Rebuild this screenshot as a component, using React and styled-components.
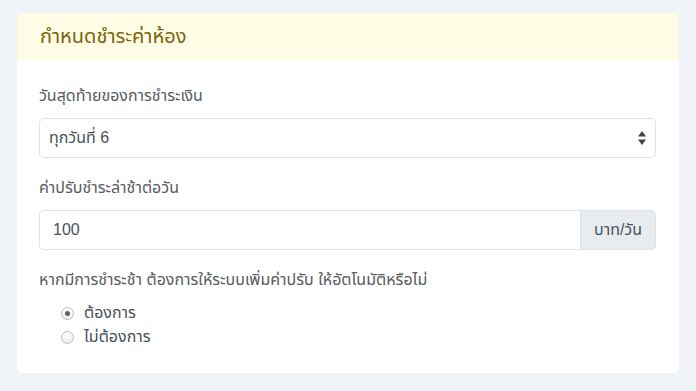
import React, { useState } from "react";
import styled, { createGlobalStyle } from "styled-components";

const GlobalStyle = createGlobalStyle`
  html, body {
    margin: 0;
    padding: 0;
    background: #f0f3f7;
    font-family: "Liberation Sans", "Noto Sans Thai", "Noto Sans", sans-serif;
  }
`;

const Page = styled.div`
  padding: 13px 17px 18px 17px;
`;

const Card = styled.section`
  background: #ffffff;
  border-radius: 5px;
  overflow: hidden;
  width: 662px;
`;

const CardHeader = styled.header`
  background: #fffce6;
  height: 48px;
  display: flex;
  align-items: center;
  padding: 0 23px;
  font-size: 20px;
  color: #7c650a;
`;

const CardBody = styled.div`
  padding: 23px 23px 24px 22px;
  display: flex;
  flex-direction: column;
`;

const Label = styled.label`
  font-size: 16px;
  line-height: 24px;
  color: #575c61;
  margin-bottom: ${(p) => p.$gap || 10}px;
`;

const Field = styled.div`
  height: 40px;
  margin-bottom: 18px;
  display: flex;
`;

const Select = styled.div`
  flex: 1;
  border: 1px solid #dfe3e8;
  border-radius: 5px;
  display: flex;
  align-items: center;
  justify-content: space-between;
  padding: 0 8px 0 9px;
  font-size: 16px;
  color: #4a5259;
`;

const Input = styled.input`
  flex: 1;
  min-width: 0;
  border: 1px solid #dfe3e8;
  border-right: none;
  border-radius: 5px 0 0 5px;
  padding: 0 13px;
  font: inherit;
  font-size: 16px;
  color: #4a5259;
  outline: none;
`;

const Addon = styled.span`
  width: 74px;
  background: #e9ecef;
  border: 1px solid #dfe3e8;
  border-radius: 0 5px 5px 0;
  display: flex;
  align-items: center;
  justify-content: center;
  font-size: 16px;
  color: #4a5259;
`;

const RadioList = styled.div`
  display: flex;
  flex-direction: column;
  padding-left: 22px;
`;

const RadioRow = styled.label`
  display: flex;
  align-items: center;
  height: 24px;
  gap: 10px;
  font-size: 16px;
  color: #4a5259;
  cursor: pointer;
`;

const Dot = styled.span`
  width: 11px;
  height: 11px;
  border-radius: 50%;
  border: 1px solid #b8bcc0;
  background: linear-gradient(#ffffff, #eceef0);
  display: flex;
  align-items: center;
  justify-content: center;
  &::after {
    content: "";
    width: 5px;
    height: 5px;
    border-radius: 50%;
    background: ${(p) => (p.$on ? "#5c6166" : "transparent")};
  }
`;

const Arrows = () => (
  <svg width="10" height="16" viewBox="0 0 10 16">
    <path d="M5 1 L9 6.5 H1 Z" fill="#3d4247" />
    <path d="M5 15 L9 9.5 H1 Z" fill="#3d4247" />
  </svg>
);

export default function App() {
  const [auto, setAuto] = useState(true);
  return (
    <>
      <GlobalStyle />
      <Page>
        <Card>
          <CardHeader>กำหนดชำระค่าห้อง</CardHeader>
          <CardBody>
            <Label>วันสุดท้ายของการชำระเงิน</Label>
            <Field>
              <Select>
                <span>ทุกวันที่ 6</span>
                <Arrows />
              </Select>
            </Field>
            <Label>ค่าปรับชำระล่าช้าต่อวัน</Label>
            <Field>
              <Input defaultValue="100" />
              <Addon>บาท/วัน</Addon>
            </Field>
            <Label $gap={9}>หากมีการชำระช้า ต้องการให้ระบบเพิ่มค่าปรับ ให้อัตโนมัติหรือไม่</Label>
            <RadioList>
              <RadioRow onClick={() => setAuto(true)}>
                <Dot $on={auto} />
                ต้องการ
              </RadioRow>
              <RadioRow onClick={() => setAuto(false)}>
                <Dot $on={!auto} />
                ไม่ต้องการ
              </RadioRow>
            </RadioList>
          </CardBody>
        </Card>
      </Page>
    </>
  );
}
